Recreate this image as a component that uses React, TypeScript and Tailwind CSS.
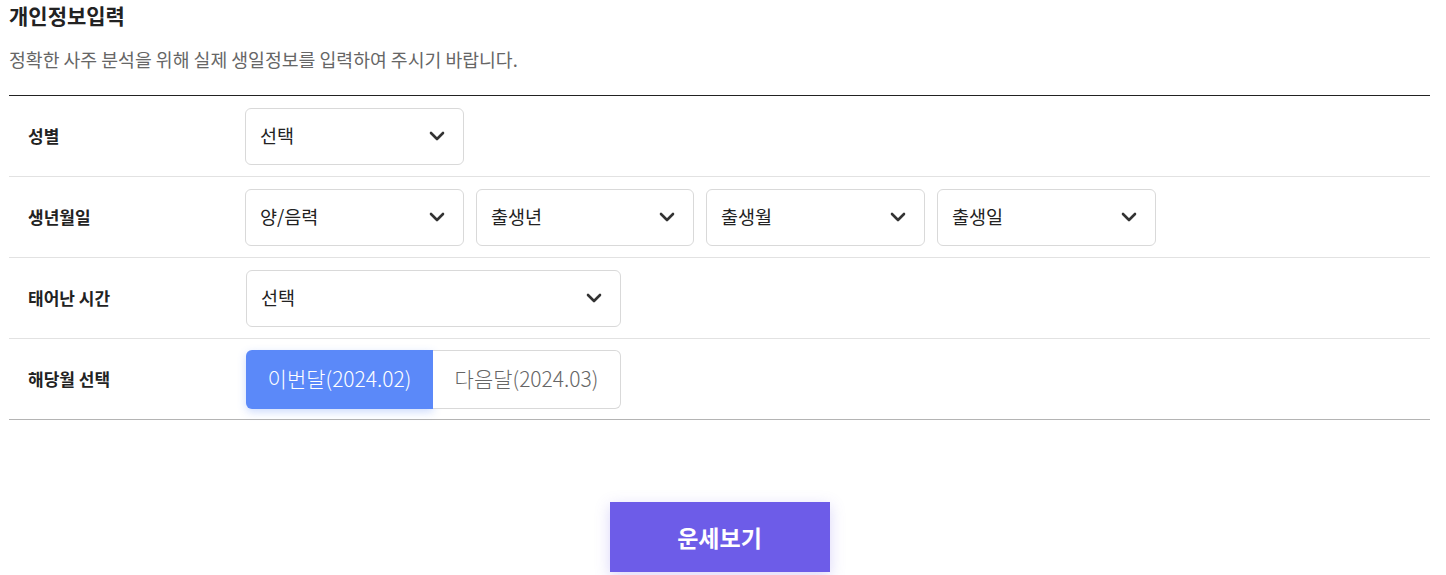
const Chevron = () => (
  <svg width="16" height="10" viewBox="0 0 16 10" fill="none" className="shrink-0">
    <polyline points="2,2 8,8 14,2" stroke="#333" strokeWidth="2.6" strokeLinecap="round" strokeLinejoin="round" />
  </svg>
);

const Select = ({ label, width }: { label: string; width: string }) => (
  <div className={`${width} h-[57px] rounded-[6px] border border-[#d9d9d9] bg-white flex items-center justify-between pl-[14px] pr-[18px]`}>
    <span className="text-[18.5px] text-[#222]">{label}</span>
    <Chevron />
  </div>
);

const Row = ({ label, children, last }: { label: string; children: React.ReactNode; last?: boolean }) => (
  <div className={`flex items-center h-[81px] border-b ${last ? "border-[#b4b4b4]" : "border-[#e2e2e2]"}`}>
    <div className="w-[236px] pl-[19px] text-[17px] font-bold text-[#222]">{label}</div>
    <div className="flex items-center gap-[12px]">{children}</div>
  </div>
);

export default function App() {
  return (
    <div className="bg-white min-h-[575px] font-['Noto_Sans_CJK_KR','Noto_Sans',sans-serif]">
      <div className="ml-[9px] w-[1421px]">
        <h2 className="text-[21px] leading-[30px] font-bold text-[#222]">개인정보입력</h2>
        <p className="mt-[17px] text-[18.3px] leading-[24px] text-[#666]">
          정확한 사주 분석을 위해 실제 생일정보를 입력하여 주시기 바랍니다.
        </p>
        <div className="mt-[24px] border-t border-[#222]">
          <Row label="성별">
            <Select label="선택" width="w-[219px]" />
          </Row>
          <Row label="생년월일">
            <Select label="양/음력" width="w-[219px]" />
            <Select label="출생년" width="w-[218px]" />
            <Select label="출생월" width="w-[219px]" />
            <Select label="출생일" width="w-[219px]" />
          </Row>
          <Row label="태어난 시간">
            <div className="pl-[1px]">
              <Select label="선택" width="w-[375px]" />
            </div>
          </Row>
          <Row label="해당월 선택" last>
            <div className="pl-[1px] flex">
              <button className="w-[187px] h-[59px] rounded-l-[6px] bg-[#5b89f9] text-white text-[21px] font-light shadow-[0_3px_8px_rgba(91,137,249,0.3)]">
                이번달(2024.02)
              </button>
              <button className="w-[188px] h-[59px] rounded-r-[6px] border border-l-0 border-[#d9d9d9] bg-white text-[#666] text-[21px] font-light">
                다음달(2024.03)
              </button>
            </div>
          </Row>
        </div>
        <div className="flex justify-center mt-[82px]">
          <button className="w-[220px] h-[70px] bg-[#6d5ce8] text-white text-[23px] font-bold shadow-[0_4px_14px_rgba(109,92,232,0.25)]">
            운세보기
          </button>
        </div>
      </div>
    </div>
  );
}
